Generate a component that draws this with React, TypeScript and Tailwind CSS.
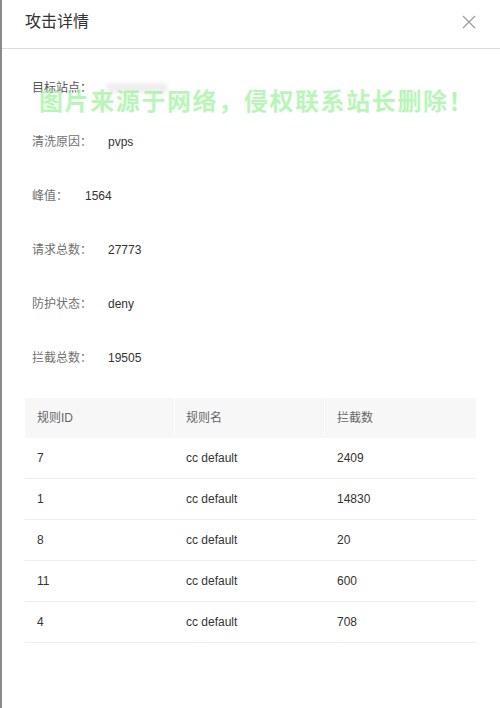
import React from "react"

const fields: { label: string; value: string; gap: string }[] = [
  { label: "清洗原因：", value: "pvps", gap: "ml-[16px]" },
  { label: "峰值：", value: "1564", gap: "ml-[17px]" },
  { label: "请求总数：", value: "27773", gap: "ml-[16px]" },
  { label: "防护状态：", value: "deny", gap: "ml-[16px]" },
  { label: "拦截总数：", value: "19505", gap: "ml-[16px]" },
]

const rules = [
  { id: "7", name: "cc default", count: "2409" },
  { id: "1", name: "cc default", count: "14830" },
  { id: "8", name: "cc default", count: "20" },
  { id: "11", name: "cc default", count: "600" },
  { id: "4", name: "cc default", count: "708" },
]

export default function App() {
  return (
    <div
      className="relative w-[500px] h-[708px] bg-white border-l-2 border-[#8a8a8a] overflow-hidden"
      style={{ fontFamily: '"Liberation Sans", "Noto Sans CJK SC", sans-serif' }}
    >
      {/* header */}
      <div className="h-[49px] flex items-center justify-between pl-[23px] pr-[24px] pb-[4px] border-b border-[#dcdcdc]">
        <span className="text-[16px] text-[#333]">攻击详情</span>
        <svg width="14" height="14" viewBox="0 0 14 14" className="text-[#999]">
          <path d="M1 1L13 13M13 1L1 13" stroke="currentColor" strokeWidth="1.1" fill="none" />
        </svg>
      </div>

      <div className="pt-[12px] px-[23px]">
        <div className="h-[54px] flex items-center pl-[7px] text-[12px]">
          <span className="text-[#555]">目标站点：</span>
          <span className="ml-[14px] w-[62px] h-[10px] rounded-full bg-[#eeeeee] blur-[2px]" />
        </div>
        {fields.map((f) => (
          <div key={f.label} className="h-[54px] flex items-center pl-[7px] text-[12px]">
            <span className="text-[#707070]">{f.label}</span>
            <span className={`${f.gap} text-[#333]`}>{f.value}</span>
          </div>
        ))}

        {/* table */}
        <div className="mt-[13px] w-[451px] text-[12px]">
          <div className="grid grid-cols-[150px_150px_151px] h-[40px] bg-[#f7f7f7] text-[#666]">
            <div className="flex items-center pl-[12px] border-r border-[#fdfdfd]">规则ID</div>
            <div className="flex items-center pl-[11px] border-r border-[#fdfdfd]">规则名</div>
            <div className="flex items-center pl-[12px]">拦截数</div>
          </div>
          {rules.map((r) => (
            <div
              key={r.id}
              className="grid grid-cols-[150px_150px_151px] h-[41px] border-b border-[#eeeeee] text-[#333]"
            >
              <div className="flex items-center pl-[12px] pb-[1px]">{r.id}</div>
              <div className="flex items-center pl-[11px] pb-[1px]">{r.name}</div>
              <div className="flex items-center pl-[12px] pb-[1px]">{r.count}</div>
            </div>
          ))}
        </div>
      </div>

      {/* watermark */}
      <div className="absolute left-[37px] top-[84px] text-[24px] font-bold tracking-[1.6px] text-[#8ef28e]/65 pointer-events-none whitespace-nowrap">
        图片来源于网络，侵权联系站长删除！
      </div>
    </div>
  )
}
